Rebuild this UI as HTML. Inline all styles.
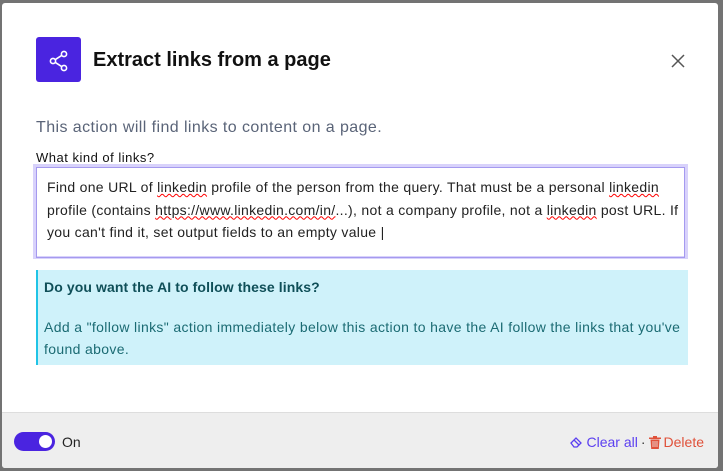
<!DOCTYPE html><html><head><style>
body{margin:0;width:723px;height:471px;background:#737373;font-family:"Liberation Sans",sans-serif;overflow:hidden;position:relative}
.m{position:absolute;left:2px;top:3px;width:716px;height:465px;background:#fff;border-radius:3px;overflow:hidden}
.icon{position:absolute;left:34px;top:34px;width:45px;height:45px;background:#4a24e0;border-radius:3px}
h1{position:absolute;left:91px;top:46px;margin:0;font-size:20px;font-weight:bold;color:#111}
.x{position:absolute;left:668px;top:50px}
.desc{position:absolute;left:34px;top:116px;font-size:16px;color:#5a6478;letter-spacing:0.42px}
.lab{position:absolute;left:34px;top:147px;font-size:13px;color:#111;letter-spacing:0.5px}
.ta{position:absolute;left:31px;top:161px;width:649px;height:89px;border:3px solid #d8d2fb}
.ta div{width:627px;height:77px;border:1px solid #a59aef;padding:8px 10px 4px;font-size:14px;line-height:22.5px;color:#222;letter-spacing:0.3px;white-space:nowrap;overflow:hidden}
.sq{text-decoration:underline wavy red;text-decoration-thickness:1px}
.info{position:absolute;left:34px;top:267px;width:650px;height:95px;background:#cff2fa;border-left:2px solid #20c4e6}
.info b{position:absolute;left:6px;top:9px;font-size:14px;color:#0f4f58;letter-spacing:0.1px}
.info p{position:absolute;left:6px;top:46px;margin:0;font-size:14px;line-height:22px;color:#1b6b73;width:640px;letter-spacing:0.35px}
.f{position:absolute;left:0;top:409px;width:716px;height:57px;background:#eee;border-top:1px solid #ddd}
.tg{position:absolute;left:12px;top:19px;width:41px;height:19px;border-radius:10px;background:#4a24e0}
.tg i{position:absolute;right:3px;top:3px;width:13px;height:13px;border-radius:50%;background:#fff}
.on{position:absolute;left:60px;top:21px;font-size:14px;color:#222}
.act{position:absolute;right:14px;top:21px;font-size:14px;color:#5b3ff0;display:flex;align-items:center;gap:3px}
.del{color:#e0513a}
</style></head><body><div class="m">
<div class="icon"><svg width="45" height="45" viewBox="0 0 45 45" fill="none" stroke="#fff" stroke-width="1.6"><circle cx="28" cy="17" r="2.6"/><circle cx="17" cy="24" r="2.6"/><circle cx="28" cy="31" r="2.6"/><path d="M19.3 22.6L25.7 18.4M19.3 25.4L25.7 29.6"/></svg></div>
<h1>Extract links from a page</h1>
<svg class="x" width="16" height="16" viewBox="0 0 16 16" stroke="#555" stroke-width="1.5"><path d="M2 2L14 14M14 2L2 14"/></svg>
<div class="desc">This action will find links to content on a page.</div>
<div class="lab">What kind of links?</div>
<div class="ta"><div>Find one URL of <span class="sq">linkedin</span> profile of the person from the query. That must be a personal <span class="sq">linkedin</span><br>profile (contains <span class="sq">https://www.linkedin.com/in/</span>...), not a company profile, not a <span class="sq">linkedin</span> post URL. If<br>you can't find it, set output fields to an empty value |</div></div>
<div class="info"><b>Do you want the AI to follow these links?</b><p>Add a "follow links" action immediately below this action to have the AI follow the links that you've found above.</p></div>
<div class="f"><div class="tg"><i></i></div><div class="on">On</div>
<div class="act"><svg width="14" height="12" viewBox="0 0 14 12" fill="none" stroke="#5b3ff0" stroke-width="1.3"><path d="M1 7L6 2L11 7L7 11H4Z M4 4L9 9"/></svg><span>Clear all</span><span style="color:#333">·</span><svg width="12" height="13" viewBox="0 0 12 13" fill="#e0513a"><rect x="0" y="1.5" width="12" height="1.5"/><rect x="4" y="0" width="4" height="1.5"/><path d="M1.5 3.5H10.5L9.8 13H2.2Z"/><path d="M4 5V11M6 5V11M8 5V11" stroke="#eee" stroke-width="0.8"/></svg><span class="del">Delete</span></div></div>
</div></body></html>
